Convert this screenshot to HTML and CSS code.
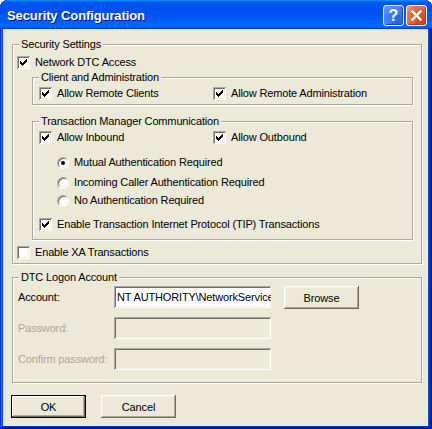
FILE: index.html
```html
<!DOCTYPE html>
<html>
<head>
<meta charset="utf-8">
<title>Security Configuration</title>
<link rel="stylesheet" href="styles.css">
</head>
<body>
<div class="window">
  <div class="titlebar">
    <span class="title">Security Configuration</span>
    <div class="title-controls">
      <span class="tbtn help">?</span>
      <span class="tbtn close"><svg width="19" height="19" viewBox="0 0 19 19"><path d="M5.5 5.5L13.5 13.5M13.5 5.5L5.5 13.5" stroke="#fff" stroke-width="2.4" stroke-linecap="square"/></svg></span>
    </div>
  </div>
  <div class="client">
    <fieldset class="group outer">
      <legend>Security Settings</legend>
      <div class="body outer-body">
        <label class="check"><span class="cb"><svg width="7" height="7" viewBox="0 0 7 7"><path d="M0 2h1v3h-1zM1 3h1v3h-1zM2 4h1v3h-1zM3 3h1v3h-1zM4 2h1v3h-1zM5 1h1v3h-1zM6 0h1v3h-1z"/></svg></span>Network DTC Access</label>

        <fieldset class="group sub ca">
          <legend>Client and Administration</legend>
          <div class="body ca-body">
            <div class="two-col">
              <label class="check"><span class="cb"><svg width="7" height="7" viewBox="0 0 7 7"><path d="M0 2h1v3h-1zM1 3h1v3h-1zM2 4h1v3h-1zM3 3h1v3h-1zM4 2h1v3h-1zM5 1h1v3h-1zM6 0h1v3h-1z"/></svg></span>Allow Remote Clients</label>
              <label class="check"><span class="cb"><svg width="7" height="7" viewBox="0 0 7 7"><path d="M0 2h1v3h-1zM1 3h1v3h-1zM2 4h1v3h-1zM3 3h1v3h-1zM4 2h1v3h-1zM5 1h1v3h-1zM6 0h1v3h-1z"/></svg></span>Allow Remote Administration</label>
            </div>
          </div>
        </fieldset>

        <fieldset class="group sub tm">
          <legend>Transaction Manager Communication</legend>
          <div class="body tm-body">
            <div class="two-col">
              <label class="check"><span class="cb"><svg width="7" height="7" viewBox="0 0 7 7"><path d="M0 2h1v3h-1zM1 3h1v3h-1zM2 4h1v3h-1zM3 3h1v3h-1zM4 2h1v3h-1zM5 1h1v3h-1zM6 0h1v3h-1z"/></svg></span>Allow Inbound</label>
              <label class="check"><span class="cb"><svg width="7" height="7" viewBox="0 0 7 7"><path d="M0 2h1v3h-1zM1 3h1v3h-1zM2 4h1v3h-1zM3 3h1v3h-1zM4 2h1v3h-1zM5 1h1v3h-1zM6 0h1v3h-1z"/></svg></span>Allow Outbound</label>
            </div>
            <label class="radio r1"><span class="rb on"></span>Mutual Authentication Required</label>
            <label class="radio r2"><span class="rb"></span>Incoming Caller Authentication Required</label>
            <label class="radio r3"><span class="rb"></span>No Authentication Required</label>
            <label class="check tip"><span class="cb"><svg width="7" height="7" viewBox="0 0 7 7"><path d="M0 2h1v3h-1zM1 3h1v3h-1zM2 4h1v3h-1zM3 3h1v3h-1zM4 2h1v3h-1zM5 1h1v3h-1zM6 0h1v3h-1z"/></svg></span>Enable Transaction Internet Protocol (TIP) Transactions</label>
          </div>
        </fieldset>

        <label class="check xa"><span class="cb"></span>Enable XA Transactions</label>
      </div>
    </fieldset>

    <fieldset class="group outer logon">
      <legend>DTC Logon Account</legend>
      <div class="body logon-body">
        <div class="field f1">
          <span class="flabel">Account:</span>
          <div class="textbox">NT AUTHORITY\NetworkService</div>
          <button class="btn browse" type="button">Browse</button>
        </div>
        <div class="field f2">
          <span class="flabel disabled">Password:</span>
          <div class="textbox off"></div>
        </div>
        <div class="field f3">
          <span class="flabel disabled">Confirm password:</span>
          <div class="textbox off"></div>
        </div>
      </div>
    </fieldset>

    <div class="actions">
      <button class="btn default" type="button">OK</button>
      <button class="btn" type="button">Cancel</button>
    </div>
  </div>
</div>
</body>
</html>
```

FILE: styles.css
```css
* { box-sizing: border-box; }

html, body {
  margin: 0;
  padding: 0;
  background: #ffffff;
}

body {
  font-family: "Liberation Sans", Arial, sans-serif;
  font-size: 11px;
  letter-spacing: -0.15px;
  color: #000;
}

.window {
  width: 432px;
  height: 429px;
  display: flex;
  flex-direction: column;
  background: #0055e5;
  border-radius: 8px 8px 0 0;
  overflow: hidden;
  box-shadow: inset -1px -1px #00138c, inset 1px 1px #0831d9,
              inset -2px -2px #001ea0, inset 2px 2px #166aee,
              inset -3px -3px #003bda, inset 3px 3px #0855dd;
}

/* ---------- title bar ---------- */
.titlebar {
  flex: none;
  height: 29px;
  display: flex;
  align-items: flex-start;
  justify-content: space-between;
  padding: 0 5px 0 7px;
  border-radius: 8px 8px 0 0;
  background: linear-gradient(180deg, #0997ff, #0053ee 8%, #0050ee 40%, #0066ff 88%, #0066ff 93%, #005bff 95%, #003dd7 96%, #003dd7);
}

.title {
  margin-top: 8px;
  font-family: "Liberation Sans", Arial, sans-serif;
  font-weight: bold;
  font-size: 13px;
  line-height: 16px;
  letter-spacing: -0.1px;
  color: #fff;
  text-shadow: 1px 1px #0f1089;
}

.title-controls {
  margin-top: 5px;
  display: flex;
  gap: 2px;
}

.tbtn {
  width: 21px;
  height: 21px;
  border: 1px solid #fff;
  border-radius: 3px;
  display: flex;
  align-items: center;
  justify-content: center;
  color: #fff;
}

.help {
  background: radial-gradient(circle at 85% 85%, #2a63e8 0%, #2f6df5 30%, #4a86ff 70%, #6fa0ff 100%);
  box-shadow: inset -1px -1px #1747c8;
  font-family: "Liberation Sans", Arial, sans-serif;
  font-weight: bold;
  font-size: 16px;
  line-height: 19px;
  letter-spacing: 0;
}

.close {
  background: radial-gradient(circle at 85% 85%, #cc4418 0%, #d9532a 35%, #e8764f 75%, #f0a080 100%);
  box-shadow: inset -1px -1px #b33a12;
}

/* ---------- client area ---------- */
.client {
  flex: 1;
  margin: 0 4px 3px 3px;
  background: #ece9d8;
  padding: 9px 0 0 8px;
  display: flex;
  flex-direction: column;
  align-items: flex-start;
}

.group {
  margin: 0;
  padding: 0;
  min-width: 0;
  border: 1px solid #aca899;
  box-shadow: inset 1px 1px #fff, 1px 1px #fff;
}

.group > legend {
  margin-left: 6px;
  padding: 0 2px;
  line-height: 13px;
  background: #ece9d8;
}

.outer {
  margin-left: 1px;
  width: 410px;
}

.outer-body {
  padding: 5px 8px 4px 4px;
}

.sub {
  margin-left: 15px;
}

.ca { margin-top: 2px; }
.ca-body { padding: 3px 6px 4px 6px; }

.tm { margin-top: 10px; }
.tm-body { padding: 3px 6px 8px 6px; }

.two-col {
  display: grid;
  grid-template-columns: 174px auto;
}

.check {
  display: flex;
  align-items: center;
  gap: 5px;
  height: 13px;
  line-height: 13px;
  white-space: nowrap;
}

.cb {
  flex: none;
  width: 13px;
  height: 13px;
  padding: 3px;
  background: #fff;
  display: flex;
  box-shadow: inset 1px 1px #aca899, inset -1px -1px #fff,
              inset 2px 2px #716f64, inset -2px -2px #f1efe2;
}

.cb svg { display: block; fill: #000; shape-rendering: crispEdges; }

.radio {
  display: flex;
  align-items: center;
  gap: 5px;
  height: 13px;
  line-height: 13px;
  margin-left: 18px;
  white-space: nowrap;
}

.r1 { margin-top: 12px; }
.r2 { margin-top: 7px; }
.r3 { margin-top: 5px; }
.tip { margin-top: 11px; }
.xa { margin-top: 6px; }

.rb {
  flex: none;
  width: 12px;
  height: 12px;
  border-radius: 50%;
  background: #fff;
  border: 1px solid;
  border-color: #aca899 #fff #fff #aca899;
  box-shadow: inset 1px 1px #716f64, inset -1px -1px #f1efe2;
  display: flex;
  align-items: center;
  justify-content: center;
}

.rb.on::after {
  content: "";
  width: 4px;
  height: 4px;
  border-radius: 50%;
  background: #000;
}

/* ---------- logon ---------- */
.logon { margin-top: 7px; }
.logon-body { padding: 2px 8px 12px 5px; }

.field {
  display: flex;
  align-items: flex-start;
  height: 22px;
}

.f1 { height: 23px; }
.f2 { margin-top: 8px; }
.f3 { margin-top: 9px; }

.flabel {
  width: 96px;
  line-height: 22px;
}

.flabel.disabled { color: #aca899; }

.textbox {
  width: 157px;
  height: 22px;
  padding: 0 2px 0 3px;
  line-height: 22px;
  background: #fff;
  white-space: nowrap;
  overflow: hidden;
  box-shadow: inset 1px 1px #aca899, inset -1px -1px #fff,
              inset 2px 2px #716f64, inset -2px -2px #f1efe2;
}

.textbox.off { background: #ece9d8; }

.btn {
  width: 75px;
  height: 23px;
  margin: 0;
  padding: 0;
  border: none;
  background: #ece9d8;
  font-family: "Liberation Sans", Arial, sans-serif;
  font-size: 11px;
  letter-spacing: -0.15px;
  color: #000;
  box-shadow: inset -1px -1px #716f64, inset 1px 1px #fff,
              inset -2px -2px #aca899, inset 2px 2px #f1efe2;
}

.btn.default {
  border: 1px solid #000;
  box-shadow: inset -1px -1px #716f64, inset 1px 1px #fff,
              inset -2px -2px #aca899;
}

.browse { margin-left: 13px; }

.actions {
  margin-top: 12px;
  display: flex;
  gap: 15px;
}
```
